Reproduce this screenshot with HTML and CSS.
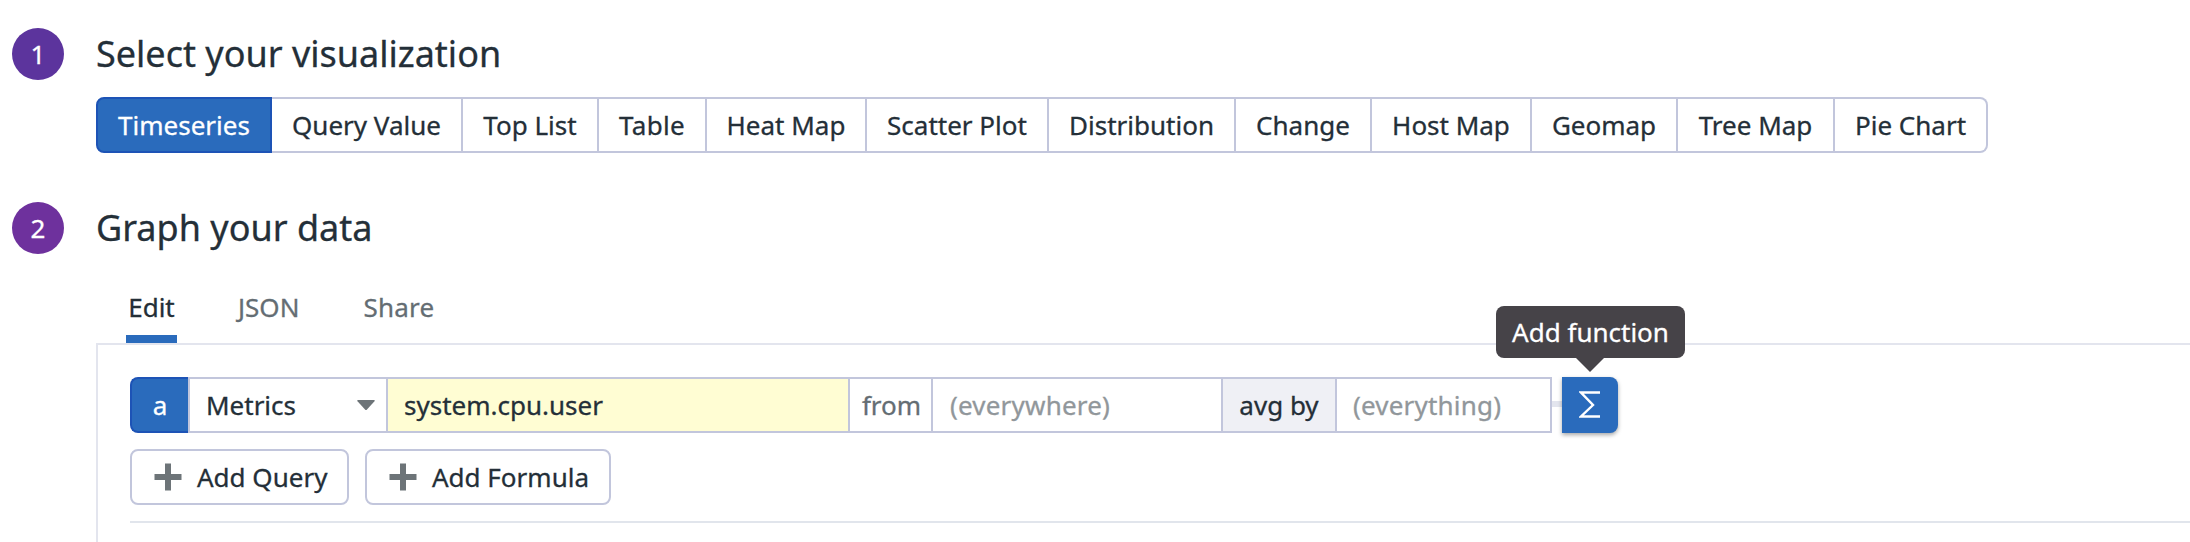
FILE: index.html
```
<!DOCTYPE html>
<html lang="en">
<head>
<meta charset="utf-8">
<title>Graph editor</title>
<link rel="stylesheet" href="styles.css">
</head>
<body>
<main class="editor">
  <section class="step step-first">
    <span class="step-number">1</span>
    <h2 class="step-title">Select your visualization</h2>
  </section>
  <div class="viz-group">
    <button class="viz active">Timeseries</button>
    <button class="viz">Query Value</button>
    <button class="viz">Top List</button>
    <button class="viz viz-table">Table</button>
    <button class="viz">Heat Map</button>
    <button class="viz">Scatter Plot</button>
    <button class="viz">Distribution</button>
    <button class="viz">Change</button>
    <button class="viz">Host Map</button>
    <button class="viz">Geomap</button>
    <button class="viz">Tree Map</button>
    <button class="viz">Pie Chart</button>
  </div>
  <section class="step step-second">
    <span class="step-number step-number-2">2</span>
    <h2 class="step-title">Graph your data</h2>
  </section>
  <nav class="tabs">
    <span class="tab tab-active">Edit</span>
    <span class="tab tab-json">JSON</span>
    <span class="tab tab-share">Share</span>
  </nav>
  <div class="panel">
    <div class="query">
      <span class="cell letter">a</span>
      <span class="cell source">Metrics
        <svg class="caret" width="18" height="10" viewBox="0 0 18 10"><path d="M1 0h16q1.500 0 .5 1.200L10 9.400q-1 1-2 0L.5 1.200Q-.5 0 1 0z" fill="#6d7478"/></svg>
      </span>
      <span class="cell metric">system.cpu.user</span>
      <span class="cell from">from</span>
      <span class="cell scope">(everywhere)</span>
      <span class="cell agg">avg by</span>
      <span class="cell group">(everything)</span>
      <span class="link"></span>
      <button class="function">
        <svg width="22" height="30" viewBox="0 0 22 30"><path d="M21 2.500H2L14 15 2 26.500H21" fill="none" stroke="#fff" stroke-width="2.400"/></svg>
        <span class="tooltip">Add function</span>
      </button>
    </div>
    <div class="actions">
      <button class="action add-query"><svg class="plus" width="28" height="28" viewBox="0 0 28 28"><path d="M14 .5v27M.5 14h27" stroke="#6d7478" stroke-width="6"/></svg>Add Query</button>
      <button class="action add-formula"><svg class="plus" width="28" height="28" viewBox="0 0 28 28"><path d="M14 .5v27M.5 14h27" stroke="#6d7478" stroke-width="6"/></svg>Add Formula</button>
    </div>
    <hr class="divider">
  </div>
</main>
</body>
</html>
```
FILE: styles.css
```
* { box-sizing: border-box; }
body {
  margin: 0;
  background: #fff;
  color: #242f38;
  font: 26px/36px "Noto Sans", sans-serif;
  -webkit-text-stroke: .3px;
  overflow: hidden;
}
button { font: inherit; color: inherit; margin: 0; padding: 0; }
svg { display: block; flex: none; }
.editor { height: 542px; display: flex; flex-direction: column; overflow: hidden; }
.step { display: flex; align-items: center; gap: 32px; height: 52px; padding-left: 12px; flex: none; }
.step-first { margin-top: 28px; }
.step-second { margin-top: 49px; }
.step-number {
  width: 52px; height: 52px; border-radius: 50%;
  background: #5c349d; color: #fff;
  display: flex; align-items: center; justify-content: center;
}
.step-number-2 { background: #6e319d; }
.step-title { margin: 0; font-size: 36px; line-height: 52px; font-weight: 400; }

.viz-group {
  display: grid; flex: none; height: 56px; margin: 17px 0 0 96px;
  grid-template-columns: 176px 191px 136px 108px 160px 182px 187px 136px 160px 146px 157px 153px;
}
.viz {
  height: 56px; background: #fff; text-align: center;
  border: solid #c2c6dc; border-width: 2px 2px 2px 0; white-space: nowrap;
}
.viz:last-child { border-radius: 0 8px 8px 0; }
.viz-table { letter-spacing: .3px; }
.viz.active {
  color: #fff; background: #2a6bbc;
  border: 2px solid #1d53b6; border-radius: 8px 0 0 8px;
}

.tabs { display: flex; flex: none; height: 89px; padding-left: 126px; color: #646d73; }
.tab { height: 89px; padding-top: 35px; }
.tab-active { width: 51px; text-align: center; color: #242f38; border-bottom: 8px solid #2a6bbc; }
.tab-json { margin: 0 64px 0 61px; }
.tab-share { letter-spacing: .2px; }

.panel {
  flex: 1; margin-left: 96px; padding: 32px 0 0 32px;
  border: solid #e3e5ee; border-width: 2px 0 0 2px;
}
.query { display: flex; height: 56px; }
.cell {
  display: flex; align-items: center; height: 56px; flex: none;
  border: solid #c2c6dc; border-width: 2px 2px 2px 0; white-space: nowrap;
}
.letter {
  width: 58px; justify-content: center; color: #fff; background: #2a6bbc;
  border: 2px solid #1d53b6; border-right: 0; border-radius: 8px 0 0 8px;
}
.source { width: 200px; border-left-width: 2px; padding: 0 11px 0 16px; justify-content: space-between; }
.metric { width: 462px; padding-left: 16px; background: #fffdd3; }
.from { width: 83px; padding-left: 2px; justify-content: center; color: #646d73; }
.scope { width: 290px; padding-left: 17px; color: #91979b; letter-spacing: .2px; }
.agg { width: 114px; justify-content: center; background: #eff0f5; }
.group { width: 215px; padding-left: 16px; color: #91979b; letter-spacing: .2px; }
.link { width: 10px; height: 6px; margin-top: 24px; background: #e3e5ee; }
.function {
  position: relative; width: 56px; height: 56px; border: 0; border-radius: 0 8px 8px 0;
  background: #2a6bbc; color: #fff; display: flex; align-items: center; justify-content: center;
  box-shadow: 0 2px 4px rgba(0, 0, 0, .35);
}
.tooltip {
  position: absolute; left: -66px; top: -71px; width: 189px; height: 52px;
  border-radius: 8px; background: #464348; line-height: 52px; text-align: center; white-space: nowrap;
}
.tooltip::after {
  content: ""; position: absolute; left: 80px; top: 52px;
  border: solid transparent; border-width: 14px 14px 0; border-top-color: #464348;
}
.actions { display: flex; gap: 16px; margin-top: 16px; }
.action {
  display: flex; align-items: center; height: 56px; padding-left: 22px;
  background: #fff; border: 2px solid #c2c6dc; border-radius: 8px; white-space: nowrap;
}
.add-query { width: 219px; }
.add-formula { width: 246px; }
.plus { margin-right: 15px; }
.divider { height: 2px; margin: 16px 0 0; border: 0; background: #e1e5ec; }
```
